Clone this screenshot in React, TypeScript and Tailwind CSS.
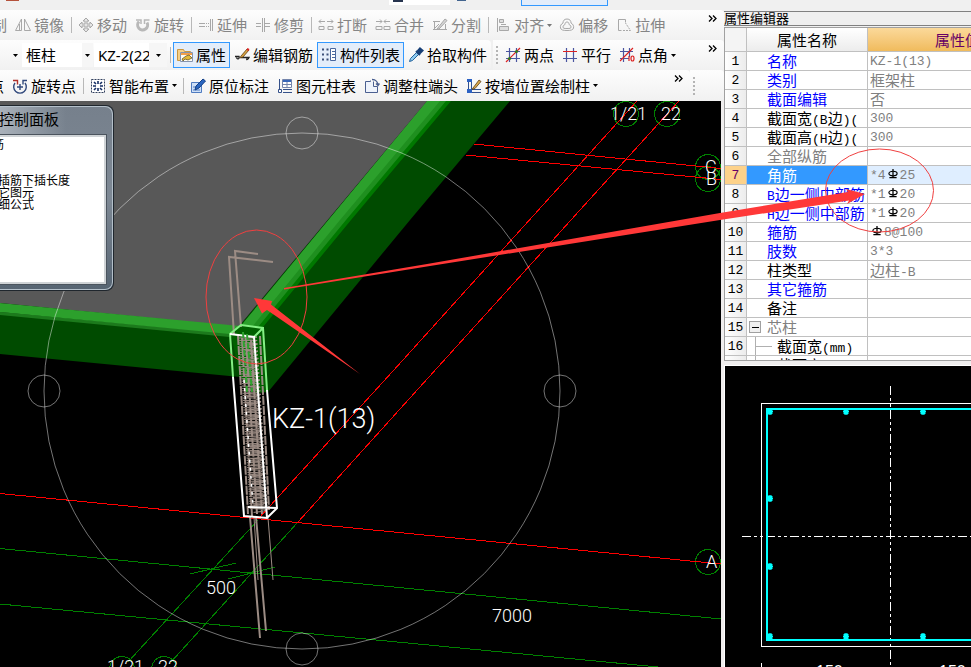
import React from "react";
import clsx from "clsx";

const UI_FONT = "font-['Noto_Sans','Noto_Sans_CJK_SC',sans-serif]";
const GRID_FONT = "font-['Noto_Sans_CJK_SC',sans-serif]";

/* ---------- toolbar icons ---------- */

const ICONS: Record<string, React.ReactNode> = {
  mirror: (
    <g fill="none" stroke="#a8a8a8">
      <path d="M6.5 2v11.500h-6zM9.500 2v11.500h6z" />
      <path d="M4.500 7v6" />
    </g>
  ),
  move: (
    <path
      d="M8 1l3 3H9v3h3V5l3 3-3 3V9H9v3h2l-3 3-3-3h2V9H4v2L1 8l3-3v2h3V4H5z"
      fill="#e4e4e4"
      stroke="#a8a8a8"
    />
  ),
  rotate: (
    <g fill="none" stroke="#b8b8b8">
      <path d="M4 4.500a5 5 0 1 0 8 1" strokeWidth="3" />
      <path d="M1 3h5v4M9.500 7V3h5" strokeWidth="1.500" />
    </g>
  ),
  extend: (
    <g fill="none" stroke="#a8a8a8">
      <path d="M1 6.500h6M1 9.500h6M12.500 2v12M14.500 2v12" />
      <path d="M8 6.500h4M8 9.500h4" strokeDasharray="1 1" />
    </g>
  ),
  trim: (
    <g fill="none" stroke="#a8a8a8">
      <path d="M1 6.500h5M1 9.500h5M10 6.500h5M10 9.500h5M7.500 1v14M9.500 1v14" />
    </g>
  ),
  split: (
    <g fill="none" stroke="#a8a8a8">
      <path d="M1 4.500h6m-4-2l-2 2 2 2M15 4.500h-6m4-2l2 2-2 2" />
      <path d="M1 9.500h5v3H1zM15 9.500h-5v3h5z" />
    </g>
  ),
  merge: (
    <g fill="none" stroke="#a8a8a8">
      <path d="M1 4.500h6m-2-2l2 2-2 2M15 4.500h-6m2-2l-2 2 2 2" />
      <path d="M1 9.500h6v3H1zM15 9.500H9v3h6z" />
    </g>
  ),
  cut: (
    <g fill="none" stroke="#a8a8a8">
      <path d="M1 4.500h7M1 12.500h14M2.500 4v9M13.500 7v6M2 12l5-5" />
      <path d="M5 12l8-10 2 1.500L7 12z" fill="#d4d4d4" />
    </g>
  ),
  align: (
    <g fill="#ddd" stroke="#a8a8a8">
      <path d="M2.500 1v14" fill="none" />
      <path d="M4.500 2.500h4v3h-4zM4.500 9.500h9v4h-9zM6 7.500h5" />
    </g>
  ),
  offset: (
    <g fill="none" stroke="#a8a8a8">
      <path d="M8 2C5 2 4 4 4 6 2 7 1 9 1.500 11 2 13 4 13.500 8 13.500S14 13 14.500 11C15 9 14 7 12 6 12 4 11 2 8 2z" />
      <path d="M8 5c-1.500 0-2 1-2 2.500-1 .5-2 1-2 2.500s1 1.500 4 1.500 4 0 4-1.500-1-2-2-2.500C10 6 9.500 5 8 5z" />
    </g>
  ),
  stretch: (
    <g fill="none" stroke="#a8a8a8">
      <path d="M2.500 2.500h7v3M2.500 2.500v11h3" />
      <path d="M7 13.500h7.500L9.500 6" strokeDasharray="2 1" />
    </g>
  ),
  property: (
    <g>
      <path d="M.5 2.500h6l1 2h6v9H.5z" fill="#f6cf86" stroke="#c9963f" />
      <path d="M3.500 5.500h12v9h-12z" fill="#fffdf5" stroke="#8494b0" />
      <path d="M4 6h11v2H4z" fill="#f2a04a" />
      <path d="M5 12l4-3 3-1 3 3-4 2-3-1-2 2z" fill="#e2b93b" stroke="#574719" strokeWidth=".7" />
    </g>
  ),
  editBar: (
    <g>
      <path d="M1 9.500h4c1 3-3 3-2 1M7 10.500h8c-1 2-3 3-2 1" fill="none" stroke="#222" strokeWidth="1.300" />
      <path d="M7 9l6-7 2 1-6 7-3 1z" fill="#d9a441" stroke="#5b3b13" strokeWidth=".8" />
      <path d="M13 2l2 1" stroke="#d22" strokeWidth="2" />
    </g>
  ),
  list: (
    <g>
      <path
        d="M1 2.500h3M1 7.500h3M1 12.500h3M5.500 2.500h2M5.500 7.500h2M5.500 12.500h2"
        stroke="#3b4f78"
        strokeWidth="2"
        strokeDasharray="2 1"
      />
      <path d="M9.500 1.500h5v12h-5z" fill="#fff" stroke="#49679e" />
      <path d="M11 4.500h3M11 7.500h3M11 10.500h3" stroke="#49679e" />
    </g>
  ),
  pick: (
    <g>
      <path d="M1.500 14.500l1-3 6-6 2 2-6 6z" fill="#8ecbf0" stroke="#25629b" />
      <path d="M8 4l4 4M9 5l3-3.500 2.500 2L11 7z" fill="#173f77" stroke="#173f77" strokeWidth="2" />
    </g>
  ),
  twoPoint: (
    <g fill="none" stroke="#4a55a0" strokeWidth="1.200">
      <path d="M1 4.500h14M1 11.500h14M4.500 1v14M11.500 1v14" />
      <path d="M1 15L15 1" stroke="#d22" />
      <circle cx="4.500" cy="11.500" r="1.500" fill="#2e7d1e" stroke="none" />
      <circle cx="11.500" cy="4.500" r="1.500" fill="#2e7d1e" stroke="none" />
    </g>
  ),
  parallel: (
    <g fill="none" stroke="#4a55a0" strokeWidth="1.200">
      <path d="M4.500 1v14M11.500 1v14M1 11.500h14" />
      <path d="M1 4.500h14" stroke="#d22" />
    </g>
  ),
  pointAngle: (
    <g fill="none" stroke="#4a55a0" strokeWidth="1.200">
      <path d="M1 4.500h13M1 11.500h9M4.500 1v14M10.500 1v9" />
      <path d="M1 14L14 1M10 14V9" stroke="#d22" />
      <ellipse cx="13.500" cy="11.500" rx="1.500" ry="2.500" stroke="#d22" />
    </g>
  ),
  rotatePoint: (
    <g fill="none" stroke="#31497c" strokeWidth="1.400">
      <path d="M3 5a6.300 6.300 0 1 0 10 0" />
      <path d="M1 2.500h4.500v4" stroke="#b0302a" />
      <path d="M15 2.500h-4v4" />
      <path d="M8 6v6M5 9h6" />
    </g>
  ),
  smart: (
    <g>
      <path d="M1.500 1.500h13v13h-13z" fill="#fff" stroke="#33415f" strokeDasharray="2 1" />
      <path
        d="M4 4l2 2M12 4l-2 2M4 12l2-2M12 12l-2-2M8 3v3M8 13v-3M3 8h3M13 8h-3"
        stroke="#142d63"
        strokeWidth="1.600"
      />
    </g>
  ),
  annotate: (
    <g>
      <path d="M1.500 4.500h10v10h-10z" fill="#cfe0f7" stroke="#4f7bc0" />
      <path d="M3 9h4M3 12h7" stroke="#4f7bc0" />
      <path d="M6 8l7-7 2.500 2L9 10l-4 2z" fill="#2b66c0" stroke="#123f86" />
    </g>
  ),
  chart: (
    <g fill="#fff" stroke="#7485ab">
      <path d="M5.500 1.500h9v8h-9z" />
      <path d="M6 3h8" stroke="#3867b9" strokeWidth="2" />
      <path d="M6 6.500h8M10 4v5" />
      <path d="M2.500 1v10M1.500 11.500h3v3h-3zM6 11.500h9M6 14.500h9" stroke="#35518a" />
    </g>
  ),
  adjust: (
    <g fill="none" stroke="#4a5f90">
      <path d="M1.500 3.500h5v-1M1.500 3.500v11h12v-6h-4v-5" fill="#eef3fc" />
      <path d="M8 1.500c4 0 6 3 6 6m-2-2l2 2 1.500-2" strokeWidth="1.400" />
    </g>
  ),
  wallDraw: (
    <g>
      <path d="M2.500 1v14M5.500 1v10M2 11.500h13M2 14.500h13" stroke="#31508f" />
      <path d="M1 1h5v3H1zM1 11h5v4H1z" fill="#2c62c4" />
      <path d="M7 10l6-8 2 1.500-6 7-3 1z" fill="#dba94b" stroke="#5b3b13" strokeWidth=".8" />
    </g>
  ),
};

function Icon({ name }: { name: string }) {
  return (
    <svg className="h-4 w-4 shrink-0" viewBox="0 0 16 16" aria-hidden="true">
      {ICONS[name]}
    </svg>
  );
}

function Caret({ muted }: { muted?: boolean }) {
  return (
    <svg className="h-[3px] w-[5px] shrink-0" viewBox="0 0 5 3" aria-hidden="true">
      <path d="M0 0h5L2.500 3z" fill={muted ? "#777" : "#000"} />
    </svg>
  );
}

type ToolProps = { icon: string; label: string; disabled?: boolean; active?: boolean; menu?: boolean };

function Tool({ icon, label, disabled, active, menu }: ToolProps) {
  return (
    <button
      type="button"
      disabled={disabled}
      className={clsx(
        "flex h-[26px] shrink-0 items-center whitespace-nowrap border",
        active ? "border-[#3399ff] bg-[#e3edfa]" : "border-transparent",
        disabled ? "text-[#858585]" : "text-black"
      )}
    >
      <span className="flex items-center gap-[3px] px-[3px]">
        <Icon name={icon} />
        <span className="text-[15px] leading-5">{label}</span>
      </span>
      {menu && (
        <span className="pr-[2px]">
          <Caret muted={disabled} />
        </span>
      )}
    </button>
  );
}

function Separator() {
  return (
    <div className="flex w-[6px] shrink-0 justify-center">
      <div className="h-4 w-px bg-[#b8b8b8]" />
    </div>
  );
}

function Grip() {
  return <div className="mx-[3px] h-[18px] w-0 shrink-0 border-l-2 border-dotted border-[#b4b4b4]" />;
}

function More() {
  return (
    <button type="button" aria-label="更多" className="flex h-full w-4 shrink-0 items-start pt-[5px]">
      <svg className="h-[7px] w-[9px]" viewBox="0 0 9 7" aria-hidden="true">
        <path d="M1 .5l3 3-3 3M5 .5l3 3-3 3" fill="none" stroke="#000" strokeWidth="1.300" />
      </svg>
    </button>
  );
}

function Bar({ className, children }: { className?: string; children?: React.ReactNode }) {
  return (
    <div
      className={clsx(
        "flex h-full items-center overflow-hidden rounded-r bg-linear-to-b from-[#fdfdfd] to-[#f1f1f1]",
        className
      )}
    >
      {children}
    </div>
  );
}

/* text that was scrolled off at the left edge of a toolbar */
function CutTool({ label, className, disabled }: { label: string; className: string; disabled?: boolean }) {
  return (
    <button
      type="button"
      disabled={disabled}
      className={clsx(
        "flex shrink-0 justify-end overflow-hidden whitespace-nowrap pr-1 text-[15px] leading-5",
        disabled && "text-[#858585]",
        className
      )}
    >
      {label}
    </button>
  );
}

type ComboProps = { label: string; value: string; className: string; arrow: string };

function Combo({ label, value, className, arrow }: ComboProps) {
  return (
    <div className={clsx("flex h-6 shrink-0 items-center bg-white", className)}>
      <select
        aria-label={label}
        defaultValue={value}
        className="h-6 min-w-0 flex-1 appearance-none overflow-hidden bg-white pl-1 text-[15px] leading-5 text-black outline-none"
      >
        <option>{value}</option>
      </select>
      <div className={clsx("flex h-6 shrink-0 items-center justify-center bg-[#f6f6f6]", arrow)}>
        <Caret />
      </div>
    </div>
  );
}

function Toolbars() {
  return (
    <div className={clsx("shrink-0 bg-[#f0f0f0]", UI_FONT)}>
      <div className="flex h-[10px] items-start overflow-hidden">
        <div className="ml-[6px] h-px w-[13px] bg-[#b5523c]" />
        <div className="ml-[370px] flex h-[5px] w-[61px] bg-white">
          <div className="ml-1 h-[2px] w-[10px] bg-[#27344f]" />
        </div>
        <div className="ml-[7px] h-px w-[9px] bg-[#42648f]" />
        <div className="ml-[55px] h-[6px] w-[87px] border border-t-0 border-[#3399ff] bg-[#e3edfa]" />
      </div>

      <div className="h-[30px]">
        <Bar>
          <CutTool label="复制" className="w-[11px]" disabled />
          <Tool icon="mirror" label="镜像" disabled />
          <Separator />
          <Tool icon="move" label="移动" disabled />
          <Tool icon="rotate" label="旋转" disabled />
          <Separator />
          <Tool icon="extend" label="延伸" disabled />
          <Tool icon="trim" label="修剪" disabled />
          <Separator />
          <Tool icon="split" label="打断" disabled />
          <Tool icon="merge" label="合并" disabled />
          <Tool icon="cut" label="分割" disabled />
          <Separator />
          <Tool icon="align" label="对齐" disabled menu />
          <Tool icon="offset" label="偏移" disabled />
          <Tool icon="stretch" label="拉伸" disabled />
          <div className="flex-1" />
          <More />
        </Bar>
      </div>

      <div className="flex h-[30px]">
        <Bar className="shrink-0">
          <div className="flex w-[22px] justify-center pl-2">
            <Caret />
          </div>
          <Combo label="构件类型" value="框柱" className="w-[71px]" arrow="w-[11px]" />
          <Combo label="构件" value="KZ-2(22)" className="ml-px w-[73px]" arrow="w-[18px]" />
          <Separator />
          <Tool icon="property" label="属性" active />
          <Tool icon="editBar" label="编辑钢筋" />
          <Tool icon="list" label="构件列表" active />
          <Tool icon="pick" label="拾取构件" />
        </Bar>
        <Bar className="ml-[2px] flex-1">
          <Grip />
          <Tool icon="twoPoint" label="两点" />
          <Tool icon="parallel" label="平行" />
          <Tool icon="pointAngle" label="点角" menu />
          <div className="flex-1" />
          <More />
        </Bar>
      </div>

      <div className="flex h-[31px]">
        <Bar className="shrink-0">
          <CutTool label="点" className="w-2" />
          <Tool icon="rotatePoint" label="旋转点" />
          <Separator />
          <Tool icon="smart" label="智能布置" menu />
          <Separator />
          <Tool icon="annotate" label="原位标注" />
          <Tool icon="chart" label="图元柱表" />
          <Tool icon="adjust" label="调整柱端头" />
          <Tool icon="wallDraw" label="按墙位置绘制柱" menu />
          <div className="w-[73px]" />
          <More />
        </Bar>
        <Bar className="flex-1">
          <Grip />
        </Bar>
      </div>
    </div>
  );
}

/* ---------- 3D view ---------- */

// stirrups of the column, drawn from top to bottom
const STIRRUPS = Array.from({ length: 72 }, (_, i) => {
  const y = 338 + i * 2.4;
  const x = 239 + i * 0.15;
  const w = 18 + ((i * 7) % 7);
  return `M${x} ${y}l${w} ${(i % 3) - 1}l-5 2l-${w - 9} ${i % 2}`;
}).join("");

function Model() {
  return (
    <svg
      className="block h-full w-full"
      viewBox="0 101 721 566"
      preserveAspectRatio="xMinYMin slice"
      role="img"
      aria-label="三维视图"
      fill="none"
    >
      <rect y="101" width="721" height="566" fill="#000" />

      {/* axis grid */}
      <g stroke="#008000" shapeRendering="crispEdges">
        <path d="M0 548.500L721 619M0 604L721 673M258 520L128 662M298 522L171 662" />
        <path d="M190 574L236 563M228 579L275 567" />
        <circle cx="626" cy="114" r="12.500" />
        <circle cx="667" cy="114" r="12.500" />
        <circle cx="708" cy="167" r="12.500" />
        <circle cx="708" cy="179" r="12.500" />
        <circle cx="708" cy="562" r="12.500" />
        <circle cx="122" cy="669" r="12.500" />
        <circle cx="164" cy="669" r="12.500" />
      </g>
      <g stroke="#f00" shapeRendering="crispEdges">
        <path d="M0 493.500L721 564M474 144L721 168.500M466 155L721 179.500" />
        <path d="M637 101L580 164L393 371L259 518M679 101L580 210L400 409L298 522" />
      </g>

      {/* slab and beams, each strip laid over the one before */}
      <path d="M427 101H510L410 220L268 392L240 377V325z" fill="#004b00" />
      <path d="M427 101H451L351 220L263 327H240z" fill="#007800" />
      <path d="M427 101H446L346 220L258 327H240z" fill="#1f8f1f" />
      <path d="M427 101H440L340 220L252 327H240z" fill="#2ca02c" />
      <path d="M0 101H427L240 325V327L0 303z" fill="#585858" />
      <path d="M0 312L240 335V377L0 354z" fill="#004b00" />
      <path d="M0 312L240 334V338L0 315z" fill="#1c7a1c" />
      <path d="M0 303L240 326V335L0 312z" fill="#2ca02c" />
      <path d="M231 334L241 325L263 327L268 392L256 393L240 377z" fill="#006000" />

      {/* reinforcement */}
      <g stroke="#9c8c84">
        <path d="M234 335L229 257L273 262M241 327L235 251L258 254" strokeWidth="2" />
        <path d={STIRRUPS} strokeWidth="1" />
        <path
          d="M238 336L248 514M242 338L252 516M246 338L257 514M251 340L262 514M260 336L269 510"
          strokeWidth="2"
          strokeDasharray="9 1"
        />
        <path d="M250 517L260 638M256 517L266 631" strokeWidth="2" />
        <path d="M268 518L273 580M254 517L258 580" />
      </g>
      <path d="M244 380L253 506" stroke="#fff" strokeDasharray="3 5" strokeWidth="1.500" />
      <g strokeWidth="2">
        <path d="M233 377L244 516L267 518L277 508L267 390M257 377L267 518M248 507L277 508" stroke="#fff" />
        <path d="M233 377L230 334L241 325L263 328L267 390M263 328L254 337" stroke="#84f084" />
        <path d="M230 334L254 337L257 377" stroke="#fff" />
      </g>
      <path d="M243 332L247 392M247 334L252 392" stroke="#2fa32f" strokeWidth="2" strokeDasharray="6 3" />

      {/* orbit handle */}
      <g stroke="#fff" strokeOpacity=".45">
        <circle cx="302" cy="391" r="258" />
        <circle cx="302" cy="133" r="16" />
        <circle cx="302" cy="649" r="16" />
        <circle cx="44" cy="391" r="16" />
        <circle cx="560" cy="391" r="16" />
      </g>

      <g fill="#fff" className="font-['Roboto',sans-serif] font-light">
        <text x="272" y="428" fontSize="27">KZ-1(13)</text>
        <g fontSize="18">
          <text x="206" y="594">500</text>
          <text x="492" y="622">7000</text>
          <text x="610" y="120">1/21</text>
          <text x="661" y="120">22</text>
          <text x="107" y="673">1/21</text>
          <text x="158" y="673">22</text>
          <text x="705" y="173">C</text>
          <text x="706" y="185">B</text>
          <text x="706" y="568">A</text>
        </g>
      </g>
    </svg>
  );
}

function ControlPanel() {
  return (
    <div className="absolute left-0 top-[4px] h-[186px] w-[114px] overflow-hidden rounded-r-lg border border-l-0 border-[#1f262d] bg-linear-to-b from-[#76808c] via-[#7d8894] to-[#566472]">
      <div className="h-full rounded-r-lg border border-l-0 border-[#b4c0ca] pr-[6px]">
        <div className="h-7 w-[66px] bg-linear-to-r from-[#a9b1ba] to-transparent">
          <h2 className={clsx("flex w-[59px] justify-end whitespace-nowrap text-[15px] leading-6 text-black", UI_FONT)}>
            控制面板
          </h2>
        </div>
        <div className="h-[149px] border-2 border-l-0 border-[#cfd3d6] bg-white outline outline-[#4b545e]">
          <ul className={clsx("flex flex-col items-start pt-px text-xs leading-3 text-black", GRID_FONT)}>
            <li className="flex w-1 justify-end">筋</li>
            <li className="mt-6 flex w-[70px] justify-end whitespace-nowrap">插筋下插长度</li>
            <li className="flex w-[34px] justify-end whitespace-nowrap">其它图元</li>
            <li className="flex w-[34px] justify-end whitespace-nowrap">详细公式</li>
          </ul>
        </div>
      </div>
    </div>
  );
}

/* ---------- property editor ---------- */

// "#" in a value stands for the rebar grade sign
const ROWS = [
  { name: "名称", value: "KZ-1(13)", tone: "blue" },
  { name: "类别", value: "框架柱", tone: "blue" },
  { name: "截面编辑", value: "否", tone: "blue" },
  { name: "截面宽(B边)(", value: "300", tone: "black" },
  { name: "截面高(H边)(", value: "300", tone: "black" },
  { name: "全部纵筋", value: "", tone: "gray" },
  { name: "角筋", value: "*4#25", tone: "selected" },
  { name: "B边一侧中部筋", value: "*1#20", tone: "blue" },
  { name: "H边一侧中部筋", value: "*1#20", tone: "blue" },
  { name: "箍筋", value: "#8@100", tone: "blue" },
  { name: "肢数", value: "3*3", tone: "blue" },
  { name: "柱类型", value: "边柱-B", tone: "black" },
  { name: "其它箍筋", value: "", tone: "blue" },
  { name: "备注", value: "", tone: "black" },
  { name: "芯柱", value: "", tone: "gray", group: true },
  { name: "截面宽(mm)", value: "", tone: "black", child: true },
  { name: "截面高(mm)", value: "", tone: "black", child: true },
];

const TONES: Record<string, string> = {
  blue: "text-[#0000ff]",
  black: "text-black",
  gray: "text-[#808080]",
  selected: "bg-[#3399ff] text-white",
};

function RebarSign() {
  return (
    <svg className="mx-[2px] h-[10px] w-[10px] shrink-0" viewBox="0 0 11 11" aria-hidden="true">
      <ellipse cx="5.500" cy="5" rx="4.500" ry="2.500" fill="none" stroke="#000" strokeWidth="1.300" />
      <path d="M5.500 0v10M1.500 9.500h8" stroke="#000" strokeWidth="1.400" />
    </svg>
  );
}

// latin runs use a narrower fixed-width face than the chinese ones
function Mixed({ text }: { text: string }) {
  const parts = text.match(/#|[\x20-\x22\x24-\x7e]+|[^\x20-\x7e]+/g) || [];
  return (
    <div className="flex h-[18px] items-baseline whitespace-nowrap leading-5">
      {parts.map((part, i) => {
        if (part === "#") return <RebarSign key={i} />;
        if (/^[\x20-\x7e]/.test(part)) {
          return (
            <span key={i} className="font-['Liberation_Mono',monospace] text-[13px]">
              {part}
            </span>
          );
        }
        return <span key={i} className="leading-[18px]">{part}</span>;
      })}
    </div>
  );
}

function PropertyEditor() {
  return (
    <section className={clsx("flex h-[361px] shrink-0 flex-col bg-[#f0f0f0] text-[15px]", GRID_FONT)}>
      <h2 className="mt-[11px] h-[15px] shrink-0 border-y border-[#808080] bg-[#efefef] text-[13px] leading-[11px] text-black">
        属性编辑器
      </h2>
      <div className="mt-[1px] min-h-0 flex-1 overflow-hidden border border-r-0 border-[#a0a0a0] bg-white">
        <table className="w-[322px] table-fixed border-separate border-spacing-0">
          <colgroup>
            <col className="w-[22px]" />
            <col className="w-[121px]" />
            <col className="w-[179px]" />
          </colgroup>
          <thead>
            <tr className="h-6">
              <th className="border-b border-r border-[#c0c0c0] bg-[#f4f4f4] p-0" />
              <th className="border-b border-r border-[#c0c0c0] bg-linear-to-b from-white to-[#ececec] p-0 font-normal leading-5 text-black">
                属性名称
              </th>
              <th className="border-b border-[#c0c0c0] bg-linear-to-b from-[#fbd99a] to-[#f0bb5c] p-0 font-normal leading-5 text-[#660066]">
                属性值
              </th>
            </tr>
          </thead>
          <tbody>
            {ROWS.map((row, i) => {
              const selected = row.tone === "selected";
              return (
                <tr key={row.name} className="h-[19px]">
                  <td
                    className={clsx(
                      "border-b border-r border-[#c0c0c0] p-0",
                      selected ? "bg-[#fdd28a] text-[#660066]" : "bg-linear-to-r from-white to-[#ececec] text-black"
                    )}
                  >
                    <div className="flex justify-center">
                      <Mixed text={String(i + 1)} />
                    </div>
                  </td>
                  <td className={clsx("overflow-hidden border-b border-r border-[#c0c0c0] p-0", TONES[row.tone])}>
                    <div className="flex h-[18px] items-center">
                      <div className={clsx("flex h-[18px] shrink-0 items-center", row.child ? "w-[30px]" : "w-5")}>
                        {row.group && (
                          <button
                            type="button"
                            aria-label="收起"
                            className="ml-[2px] flex h-3 w-3 items-center justify-center border border-[#a0a0a0] bg-[#f0f0f0]"
                          >
                            <span className="h-px w-[7px] bg-black" />
                          </button>
                        )}
                        {row.child && (
                          <>
                            <span className="ml-2 h-[18px] w-px bg-[#b0b0b0]" />
                            <span className="h-px w-4 bg-[#b0b0b0]" />
                          </>
                        )}
                      </div>
                      <Mixed text={row.name} />
                    </div>
                  </td>
                  <td
                    className={clsx(
                      "border-b border-[#c0c0c0] p-0 pl-[2px] text-[#808080]",
                      selected && "bg-[#dfeeff]"
                    )}
                  >
                    <Mixed text={row.value} />
                  </td>
                </tr>
              );
            })}
          </tbody>
        </table>
      </div>
    </section>
  );
}

const BARS = [
  [770, 411], [846, 411], [923, 411],
  [770, 498], [770, 566],
  [770, 636], [846, 636], [923, 636],
];

function SectionView() {
  return (
    <div className="mt-1 min-h-0 flex-1 border-l border-t border-white bg-black">
      <svg
        className="block h-full w-full"
        viewBox="725 366 246 301"
        preserveAspectRatio="xMinYMin slice"
        role="img"
        aria-label="截面图"
        fill="none"
      >
        <g stroke="#fff" shapeRendering="crispEdges">
          <path d="M980 403.500H761.500V646.500H980M761.500 663V667" />
          <path d="M890.500 386V667M742 536.500H980" strokeDasharray="9 3 3 3 3 3" />
        </g>
        <path d="M980 409H767V640H980" stroke="#0ff" strokeWidth="2" shapeRendering="crispEdges" />
        {BARS.map(([x, y]) => (
          <path key={`${x}-${y}`} d={`M${x - 3} ${y + 0.5}h6M${x} ${y - 3}v7M${x - 2} ${y - 2}h4v5h-4z`} fill="#0ff" stroke="#0ff" />
        ))}
        <g fill="#fff" fontSize="16" className="font-['Liberation_Sans',sans-serif]">
          <text x="816" y="677">150</text>
          <text x="939" y="677">150</text>
        </g>
      </svg>
    </div>
  );
}

/* red marks drawn across both panes */
function Markup() {
  return (
    <svg
      className="pointer-events-none absolute inset-0 h-full w-full"
      viewBox="0 0 971 667"
      preserveAspectRatio="xMinYMin slice"
      aria-hidden="true"
    >
      <g fill="none" stroke="#f04040">
        <ellipse cx="256.500" cy="297" rx="50.500" ry="67" />
        <ellipse cx="879.500" cy="190.500" rx="54" ry="41.500" />
      </g>
      <g fill="#ff3838">
        <path d="M254 298L272 301L271 304.500L360 374L267 310L262 313.500z" />
        <path d="M284 288L430 263.500L720 213L848 192L846 189L865 194L847 204L849 200.500L720 220L430 266L284 289.500z" />
      </g>
    </svg>
  );
}

export default function App() {
  return (
    <div className="relative flex h-screen overflow-hidden bg-[#f0eeee]">
      <main className="flex min-w-0 flex-1 flex-col">
        <Toolbars />
        <div className="relative mr-[3px] min-h-0 flex-1 bg-black">
          <Model />
          <ControlPanel />
        </div>
      </main>
      <aside className="flex w-[247px] shrink-0 flex-col">
        <PropertyEditor />
        <SectionView />
      </aside>
      <Markup />
    </div>
  );
}
